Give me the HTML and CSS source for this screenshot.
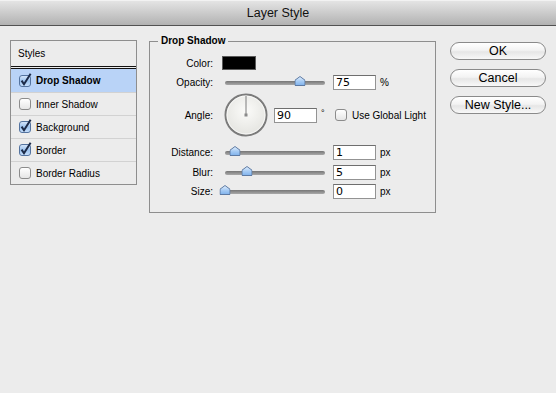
FILE: index.html
```html
<!DOCTYPE html>
<html lang="en">
<head>
  <meta charset="UTF-8">
  <title>Layer Style</title>
  <link rel="stylesheet" href="styles.css">
</head>
<body>
  <div class="dialog">
    <header class="titlebar">Layer Style</header>

    <main class="content">
      <!-- list of effects -->
      <section class="styles-list">
        <div class="list-head">Styles</div>
        <ul class="items">
          <li class="item selected">
            <span class="check on"><svg width="13" height="13" viewBox="0 0 13 13"><rect x="0.5" y="0.5" width="11" height="11" rx="2.5" fill="url(#cbBlue)" stroke="#54739f"/><path d="M2.6 5.6 L5 9.2 L11.6 -1.2" fill="none" stroke="#1d2b48" stroke-width="2"/></svg></span>
            Drop Shadow
          </li>
          <li class="item"><span class="check"></span>Inner Shadow</li>
          <li class="item">
            <span class="check on"><svg width="13" height="13" viewBox="0 0 13 13"><rect x="0.5" y="0.5" width="11" height="11" rx="2.5" fill="url(#cbBlue)" stroke="#54739f"/><path d="M2.6 5.6 L5 9.2 L11.6 -1.2" fill="none" stroke="#1d2b48" stroke-width="2"/></svg></span>
            Background
          </li>
          <li class="item">
            <span class="check on"><svg width="13" height="13" viewBox="0 0 13 13"><rect x="0.5" y="0.5" width="11" height="11" rx="2.5" fill="url(#cbBlue)" stroke="#54739f"/><path d="M2.6 5.6 L5 9.2 L11.6 -1.2" fill="none" stroke="#1d2b48" stroke-width="2"/></svg></span>
            Border
          </li>
          <li class="item"><span class="check"></span>Border Radius</li>
        </ul>
      </section>

      <!-- drop shadow settings -->
      <fieldset class="group">
        <legend>Drop Shadow</legend>

        <div class="row row-color">
          <span class="label">Color:</span>
          <span class="swatch"></span>
        </div>

        <div class="row row-opacity">
          <span class="label">Opacity:</span>
          <div class="slider"><div class="track"><span class="thumb" style="left: 75%"><svg width="11" height="10" viewBox="0 0 11 10"><path d="M5.5 0.5 L10.5 4.2 V9.5 H0.5 V4.2 Z" fill="url(#thumbBlue)" stroke="#5d7aa3"/></svg></span></div></div>
          <input class="field" type="text" value="75">
          <span class="unit">%</span>
        </div>

        <div class="row row-angle">
          <span class="label">Angle:</span>
          <svg class="dial" width="44" height="44" viewBox="0 0 44 44">
            <circle cx="22" cy="22" r="20.5" fill="url(#dialFace)" stroke="#7b7b7b" stroke-width="2"/>
            <circle cx="22" cy="22" r="19" fill="none" stroke="#ffffff" stroke-width="1" opacity="0.7"/>
            <line x1="22" y1="22" x2="22" y2="3" stroke="#7d7d7d" stroke-width="1"/>
            <rect x="20.5" y="20.5" width="3" height="3" fill="#8a8a8a"/>
          </svg>
          <input class="field" type="text" value="90">
          <span class="degree">°</span>
          <span class="check"></span>
          <span class="check-label">Use Global Light</span>
        </div>

        <div class="row row-distance">
          <span class="label">Distance:</span>
          <div class="slider"><div class="track"><span class="thumb" style="left: 10%"><svg width="11" height="10" viewBox="0 0 11 10"><path d="M5.5 0.5 L10.5 4.2 V9.5 H0.5 V4.2 Z" fill="url(#thumbBlue)" stroke="#5d7aa3"/></svg></span></div></div>
          <input class="field" type="text" value="1">
          <span class="unit">px</span>
        </div>

        <div class="row row-blur">
          <span class="label">Blur:</span>
          <div class="slider"><div class="track"><span class="thumb" style="left: 22%"><svg width="11" height="10" viewBox="0 0 11 10"><path d="M5.5 0.5 L10.5 4.2 V9.5 H0.5 V4.2 Z" fill="url(#thumbBlue)" stroke="#5d7aa3"/></svg></span></div></div>
          <input class="field" type="text" value="5">
          <span class="unit">px</span>
        </div>

        <div class="row row-size">
          <span class="label">Size:</span>
          <div class="slider"><div class="track"><span class="thumb" style="left: 0%"><svg width="11" height="10" viewBox="0 0 11 10"><path d="M5.5 0.5 L10.5 4.2 V9.5 H0.5 V4.2 Z" fill="url(#thumbBlue)" stroke="#5d7aa3"/></svg></span></div></div>
          <input class="field" type="text" value="0">
          <span class="unit">px</span>
        </div>
      </fieldset>

      <div class="buttons">
        <button class="btn">OK</button>
        <button class="btn">Cancel</button>
        <button class="btn">New Style...</button>
      </div>
    </main>
  </div>

  <!-- shared gradients -->
  <svg class="defs" width="0" height="0">
    <defs>
      <linearGradient id="cbBlue" x1="0" y1="0" x2="0" y2="1">
        <stop offset="0" stop-color="#d9e8fa"/>
        <stop offset="0.5" stop-color="#9cc2ee"/>
        <stop offset="1" stop-color="#c8e0fb"/>
      </linearGradient>
      <linearGradient id="thumbBlue" x1="0" y1="0" x2="0" y2="1">
        <stop offset="0" stop-color="#e6f1fd"/>
        <stop offset="0.5" stop-color="#a9cdf5"/>
        <stop offset="1" stop-color="#7fb2ec"/>
      </linearGradient>
      <radialGradient id="dialFace" cx="0.5" cy="0.4" r="0.6">
        <stop offset="0" stop-color="#fbfbf9"/>
        <stop offset="1" stop-color="#e4e4e0"/>
      </radialGradient>
    </defs>
  </svg>
</body>
</html>
```

FILE: styles.css
```css
body {
  margin: 0;
  padding: 0;
  width: 556px;
  height: 393px;
  background-color: #ececec;
  font-family: 'Liberation Sans', Arial, sans-serif;
  font-size: 10px;
  color: #000;
  overflow: hidden;
}

.defs {
  position: absolute;
}

.titlebar {
  height: 26px;
  box-sizing: border-box;
  border-top: 1px solid #f2f2f2;
  border-bottom: 1px solid #525252;
  background: linear-gradient(#e4e4e4, #b2b2b2);
  font-size: 12.5px;
  line-height: 24px;
  text-align: center;
  color: #111;
}

.content {
  display: flex;
  align-items: flex-start;
  padding: 9px 10px 0 10px;
}

/* styles list */
.styles-list {
  width: 127px;
  margin-top: 5px;
  border: 1px solid #8e8e8e;
  box-sizing: border-box;
  background: #ececec;
}

.list-head {
  height: 25px;
  line-height: 25px;
  padding-left: 7px;
  border-bottom: 3px double #111;
}

.items {
  list-style: none;
  margin: 0;
  padding: 0;
}

.item {
  display: flex;
  align-items: center;
  gap: 5px;
  height: 22px;
  padding-left: 8px;
  border-top: 1px solid #d2d2d2;
}

.item:first-child {
  height: 23px;
  border-top: none;
}

.item.selected {
  background: #b9d3f7;
  font-weight: bold;
}

.check {
  display: inline-block;
  width: 12px;
  height: 12px;
  box-sizing: border-box;
  border: 1px solid #8c8c8c;
  border-radius: 3px;
  background: linear-gradient(#ffffff, #e6e6e6);
  flex-shrink: 0;
}

.check.on {
  border: none;
  background: none;
}

.check svg {
  display: block;
  overflow: visible;
}

/* drop shadow group */
.group {
  width: 287px;
  margin: 0 0 0 12px;
  padding: 0 0 13px 0;
  border: 1px solid #8e8e8e;
  box-sizing: border-box;
  min-width: 0;
}

.group legend {
  margin-left: 8px;
  padding: 0 3px;
  font-weight: bold;
  line-height: 12px;
}

.row {
  display: flex;
  align-items: center;
  height: 15px;
  margin-top: 5px;
}

.label {
  width: 63px;
  text-align: right;
  margin-right: 9px;
  flex-shrink: 0;
}

.row-color {
  height: 14px;
  margin-top: 9px;
}

.swatch {
  width: 34px;
  height: 14px;
  box-sizing: border-box;
  background: #000;
  border: 1px solid #5a5a5a;
}

.row-opacity {
  margin-top: 5px;
}

.row-angle {
  height: 44px;
  margin-top: 3px;
}

.row-distance {
  margin-top: 8px;
}

.row-size {
  margin-top: 4px;
}

.slider {
  width: 106px;
  height: 15px;
  display: flex;
  align-items: center;
  margin-right: 5px;
}

.track {
  position: relative;
  width: 100px;
  height: 4px;
  margin-left: 3px;
  border-radius: 2px;
  background: linear-gradient(#767676, #a9a9a9);
}

.thumb {
  position: absolute;
  top: -5px;
  width: 11px;
  height: 10px;
  transform: translateX(-50%);
}

.thumb svg {
  display: block;
}

.field {
  width: 43px;
  height: 15px;
  box-sizing: border-box;
  margin: 0;
  padding: 0 0 0 2px;
  border: 1px solid #939393;
  border-top-color: #6e6e6e;
  background: #fff;
  font-family: 'DejaVu Sans', sans-serif;
  font-size: 11px;
  line-height: 13px;
  color: #000;
  outline: none;
}

.unit {
  margin-left: 4px;
}

.dial {
  display: block;
  margin-left: 2px;
  margin-right: 6px;
}

.degree {
  width: 14px;
  margin-left: 4px;
  font-size: 9px;
  align-self: flex-start;
  margin-top: 15px;
}

.check-label {
  margin-left: 5px;
}

/* buttons */
.buttons {
  display: flex;
  flex-direction: column;
  gap: 9px;
  margin-top: 7px;
  margin-left: 14px;
}

.btn {
  width: 96px;
  height: 18px;
  margin: 0;
  padding: 0;
  border: 1px solid #8a8a8a;
  border-radius: 9px;
  background: linear-gradient(#ffffff, #f3f3f3 45%, #e6e6e6 55%, #f8f8f8);
  font-family: 'Liberation Sans', Arial, sans-serif;
  font-size: 12.5px;
  line-height: 16px;
  color: #000;
}
```
